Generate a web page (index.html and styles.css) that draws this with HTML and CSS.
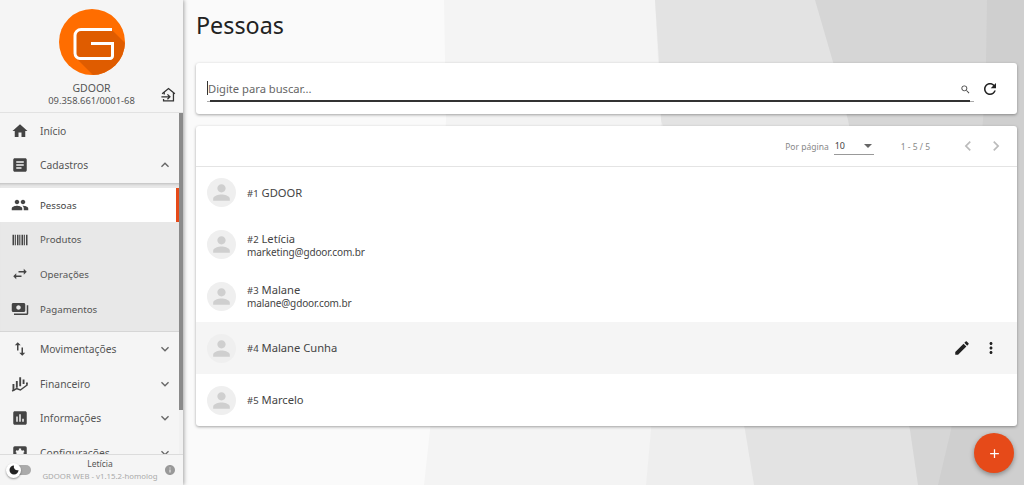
FILE: index.html
```html
<!DOCTYPE html>
<html lang="pt-BR">
<head>
<meta charset="utf-8">
<title>Pessoas</title>
<link rel="stylesheet" href="styles.css">
</head>
<body>
<div class="app">
  <aside class="sidebar">
    <header class="brand">
      <svg class="logo" viewBox="0 0 66 66">
        <defs><clipPath id="lc"><circle cx="33" cy="33" r="33"/></clipPath></defs>
        <circle cx="33" cy="33" r="33" fill="#ff6d00"/>
        <path clip-path="url(#lc)" d="M14 46 L37 69 H70 V38 L52 20 H18z" fill="#df5c00"/>
        <path d="M53 20.500H22a6 6 0 0 0-6 6v18a5 5 0 0 0 5 5h30a2.500 2.500 0 0 0 2.500-2.500V34.500H32" fill="none" stroke="#fff" stroke-width="3"/>
      </svg>
      <div class="brand-name">GDOOR</div>
      <div class="brand-doc">09.358.661/0001-68</div>
      <svg class="brand-switch" viewBox="0 0 24 24"><path d="M6 12V9M3 11 12 3.500 21 11M19 9v12H5v-2.500M2 15.300h12M10.500 11.800l3.500 3.500-3.500 3.500" fill="none" stroke="#333" stroke-width="1.800"/></svg>
    </header>
    <div class="nav-wrap">
      <nav class="nav">
        <a class="item"><svg class="ic" viewBox="0 0 24 24"><path d="M10 20v-6h4v6h5v-8h3L12 3 2 12h3v8z"/></svg><span>Início</span></a>
        <a class="item"><svg class="ic" viewBox="0 0 24 24"><path d="M19 3H5c-1.100 0-2 .9-2 2v14c0 1.100.9 2 2 2h14c1.100 0 2-.9 2-2V5c0-1.100-.9-2-2-2zm-5 14H7v-2h7v2zm3-4H7v-2h10v2zm0-4H7V7h10v2z"/></svg><span>Cadastros</span><svg class="chev" viewBox="0 0 24 24"><path d="M12 8l-6 6 1.410 1.410L12 10.830l4.590 4.580L18 14z"/></svg></a>
        <div class="sub">
          <a class="item sub-item active"><svg class="ic" viewBox="0 0 24 24"><path d="M16 11c1.660 0 2.990-1.340 2.990-3S17.660 5 16 5c-1.660 0-3 1.340-3 3s1.340 3 3 3zm-8 0c1.660 0 2.990-1.340 2.990-3S9.660 5 8 5C6.340 5 5 6.340 5 8s1.340 3 3 3zm0 2c-2.330 0-7 1.170-7 3.500V19h14v-2.500c0-2.330-4.670-3.500-7-3.500zm8 0c-.29 0-.62.02-.97.05 1.160.84 1.970 1.970 1.970 3.450V19h6v-2.500c0-2.330-4.670-3.500-7-3.500z"/></svg><span>Pessoas</span></a>
          <a class="item sub-item"><svg class="ic" viewBox="0 0 24 24"><path d="M2 5h2v14H2zM5 5h1.500v14H5zM8 5h2v14H8zM11 5h1.500v14H11zM14 5h2v14h-2zM17 5h1.500v14H17zM20 5h2v14h-2z"/></svg><span>Produtos</span></a>
          <a class="item sub-item"><svg class="ic" viewBox="0 0 24 24"><path d="M6.990 11L3 15l3.990 4v-3H14v-2H6.990v-3zM21 9l-3.990-4v3H10v2h7.010v3L21 9z"/></svg><span>Operações</span></a>
          <a class="item sub-item"><svg class="ic" viewBox="0 0 24 24"><path d="M19 14V6c0-1.100-.9-2-2-2H3c-1.100 0-2 .9-2 2v8c0 1.100.9 2 2 2h14c1.100 0 2-.9 2-2zm-9-1c-1.660 0-3-1.340-3-3s1.340-3 3-3 3 1.340 3 3-1.340 3-3 3zm13-6v11c0 1.100-.9 2-2 2H4v-2h17V7h2z"/></svg><span>Pagamentos</span></a>
        </div>
        <a class="item"><svg class="ic" viewBox="0 0 24 24"><path d="M16 17.010V10h-2v7.010h-3L15 21l4-3.990h-3zM9 3L5 6.990h3V14h2V6.990h3L9 3z"/></svg><span>Movimentações</span><svg class="chev" viewBox="0 0 24 24"><path d="M16.590 8.590L12 13.170 7.410 8.590 6 10l6 6 6-6z"/></svg></a>
        <a class="item"><svg class="ic" viewBox="0 0 24 24"><path d="M2 12h2.500v9H2zM6.500 8H9v9H6.500zM11 3h2.500v12H11zM15.500 6H18v6h-2.500zM20 10h2.500v3H20z"/><path d="M1.500 21.500l6-3.500 5 2 9.500-7" fill="none" stroke="#444" stroke-width="2"/></svg><span>Financeiro</span><svg class="chev" viewBox="0 0 24 24"><path d="M16.590 8.590L12 13.170 7.410 8.590 6 10l6 6 6-6z"/></svg></a>
        <a class="item"><svg class="ic" viewBox="0 0 24 24"><path d="M19 3H5c-1.100 0-2 .9-2 2v14c0 1.100.9 2 2 2h14c1.100 0 2-.9 2-2V5c0-1.100-.9-2-2-2zM9 17H7v-7h2v7zm4 0h-2V7h2v10zm4 0h-2v-4h2v4z"/></svg><span>Informações</span><svg class="chev" viewBox="0 0 24 24"><path d="M16.590 8.590L12 13.170 7.410 8.590 6 10l6 6 6-6z"/></svg></a>
        <a class="item"><svg class="ic" viewBox="0 0 24 24"><path fill-rule="evenodd" d="M5 3h14a2 2 0 0 1 2 2v14a2 2 0 0 1-2 2H5a2 2 0 0 1-2-2V5a2 2 0 0 1 2-2zm5.500 3v2L9 9 7.500 8 6 10.500l1.500 1v1L6 13.500 7.500 16 9 15l1.500 1v2h3v-2l1.500-1 1.500 1 1.500-2.500-1.500-1v-1l1.500-1L16.500 8 15 9l-1.500-1V6z"/></svg><span>Configurações</span><svg class="chev" viewBox="0 0 24 24"><path d="M16.590 8.590L12 13.170 7.410 8.590 6 10l6 6 6-6z"/></svg></a>
      </nav>
      <div class="scrollbar"><div class="thumb"></div></div>
    </div>
    <footer class="side-foot">
      <div class="toggle"><span class="track"></span><span class="knob"><svg viewBox="0 0 24 24"><path d="M12 3a9 9 0 1 0 9 9 7 7 0 0 1-9-9z"/></svg></span></div>
      <div class="foot-text">
        <div class="foot-user">Letícia</div>
        <div class="foot-ver">GDOOR WEB - v1.15.2-homolog</div>
      </div>
      <svg class="foot-info" viewBox="0 0 24 24"><path d="M12 2C6.480 2 2 6.480 2 12s4.480 10 10 10 10-4.480 10-10S17.520 2 12 2zm1 15h-2v-6h2v6zm0-8h-2V7h2v2z"/></svg>
    </footer>
  </aside>

  <main class="main">
    <svg class="bg" viewBox="-1 0 841 485" preserveAspectRatio="none">
      <rect x="-1" width="841" height="485" fill="#fafafa"/>
      <polygon points="260,0 840,0 840,485 240,485 246,430 262,120" fill="#f4f4f4"/>
      <polygon points="471,0 840,0 840,485 462,485 467,430 477,120" fill="#eeeeee"/>
      <polygon points="471,0 840,0 840,485 570,485 561,430 530,300 477,120 475,62" fill="#e3e3e3"/>
      <polygon points="631,0 840,0 840,485 734,485 726,430 664,120 649,62" fill="#d6d6d6"/>
      <polygon points="803,0 840,0 840,485 754,485 767,430 799,120 802,62" fill="#cfcfcf"/>
    </svg>
    <h1 class="title">Pessoas</h1>
    <section class="card search-card">
      <div class="search-field">
        <span class="caret"></span><span class="placeholder">Digite para buscar...</span>
        <svg class="search-ic" viewBox="0 0 24 24"><path d="M15.500 14h-.79l-.28-.27C15.410 12.590 16 11.110 16 9.500 16 5.910 13.090 3 9.500 3S3 5.910 3 9.500 5.910 16 9.500 16c1.610 0 3.090-.59 4.230-1.570l.27.28v.79l5 4.990L20.490 19l-4.990-5zm-6 0C7.010 14 5 11.990 5 9.500S7.010 5 9.500 5 14 7.010 14 9.500 11.990 14 9.500 14z"/></svg>
      </div>
      <svg class="refresh" viewBox="0 0 24 24"><path d="M17.650 6.350C16.200 4.900 14.210 4 12 4c-4.420 0-7.990 3.580-7.990 8s3.570 8 7.990 8c3.730 0 6.840-2.550 7.730-6h-2.080c-.82 2.330-3.040 4-5.650 4-3.310 0-6-2.690-6-6s2.690-6 6-6c1.660 0 3.140.69 4.220 1.780L13 11h7V4l-2.350 2.350z"/></svg>
    </section>
    <section class="card list-card">
      <div class="pager">
        <span class="per-label">Por página</span>
        <div class="per-select"><span>10</span><i class="arrow"></i></div>
        <span class="range">1 - 5 / 5</span>
        <svg class="pg" viewBox="0 0 24 24"><path d="M15.410 7.410L14 6l-6 6 6 6 1.410-1.410L10.830 12z"/></svg>
        <svg class="pg" viewBox="0 0 24 24"><path d="M10 6L8.590 7.410 13.170 12l-4.580 4.590L10 18l6-6z"/></svg>
      </div>
      <div class="row">
        <span class="avatar"><svg viewBox="0 0 24 24"><path d="M12 12c2.210 0 4-1.790 4-4s-1.790-4-4-4-4 1.790-4 4 1.790 4 4 4zm0 2c-2.670 0-8 1.340-8 4v2h16v-2c0-2.660-5.330-4-8-4z"/></svg></span>
        <div class="info"><div class="name"><small>#1</small> GDOOR</div></div>
      </div>
      <div class="row">
        <span class="avatar"><svg viewBox="0 0 24 24"><path d="M12 12c2.210 0 4-1.790 4-4s-1.790-4-4-4-4 1.790-4 4 1.790 4 4 4zm0 2c-2.670 0-8 1.340-8 4v2h16v-2c0-2.660-5.330-4-8-4z"/></svg></span>
        <div class="info"><div class="name"><small>#2</small> Letícia</div><div class="email">marketing@gdoor.com.br</div></div>
      </div>
      <div class="row">
        <span class="avatar"><svg viewBox="0 0 24 24"><path d="M12 12c2.210 0 4-1.790 4-4s-1.790-4-4-4-4 1.790-4 4 1.790 4 4 4zm0 2c-2.670 0-8 1.340-8 4v2h16v-2c0-2.660-5.330-4-8-4z"/></svg></span>
        <div class="info"><div class="name"><small>#3</small> Malane</div><div class="email">malane@gdoor.com.br</div></div>
      </div>
      <div class="row hover">
        <span class="avatar"><svg viewBox="0 0 24 24"><path d="M12 12c2.210 0 4-1.790 4-4s-1.790-4-4-4-4 1.790-4 4 1.790 4 4 4zm0 2c-2.670 0-8 1.340-8 4v2h16v-2c0-2.660-5.330-4-8-4z"/></svg></span>
        <div class="info"><div class="name"><small>#4</small> Malane Cunha</div></div>
        <div class="actions">
          <svg class="act-edit" viewBox="0 0 24 24"><path d="M3 17.250V21h3.750L17.810 9.940l-3.750-3.750L3 17.250zM20.710 7.040c.39-.39.39-1.020 0-1.410l-2.340-2.340c-.39-.39-1.020-.39-1.410 0l-1.830 1.830 3.750 3.750 1.830-1.830z"/></svg>
          <svg class="act-more" viewBox="0 0 24 24"><path d="M12 8c1.100 0 2-.9 2-2s-.9-2-2-2-2 .9-2 2 .9 2 2 2zm0 2c-1.100 0-2 .9-2 2s.9 2 2 2 2-.9 2-2-.9-2-2-2zm0 6c-1.100 0-2 .9-2 2s.9 2 2 2 2-.9 2-2-.9-2-2-2z"/></svg>
        </div>
      </div>
      <div class="row">
        <span class="avatar"><svg viewBox="0 0 24 24"><path d="M12 12c2.210 0 4-1.790 4-4s-1.790-4-4-4-4 1.790-4 4 1.790 4 4 4zm0 2c-2.670 0-8 1.340-8 4v2h16v-2c0-2.660-5.330-4-8-4z"/></svg></span>
        <div class="info"><div class="name"><small>#5</small> Marcelo</div></div>
      </div>
    </section>
    <button class="fab" aria-label="Adicionar"><svg viewBox="0 0 24 24"><path d="M19 13h-6v6h-2v-6H5v-2h6V5h2v6h6v2z"/></svg></button>
  </main>
</div>
</body>
</html>
```

FILE: styles.css
```css
* { box-sizing: border-box; }
html, body { margin: 0; height: 100%; overflow: hidden; }
body { font-family: "Noto Sans", "Open Sans", sans-serif; color: #444; background: #fafafa; }
.app { display: flex; height: 485px; width: 1024px; }

/* Sidebar */
.sidebar { width: 183px; flex: none; display: flex; flex-direction: column; background: #f5f5f5; box-shadow: 1px 0 4px rgba(0,0,0,.35); position: relative; z-index: 2; }
.brand { height: 113px; flex: none; padding-top: 9px; display: flex; flex-direction: column; align-items: center; position: relative; border-bottom: 1px solid #e2e2e2; }
.logo { width: 66px; height: 66px; display: block; }
.brand-name { font-size: 10.500px; line-height: 13px; margin-top: 7px; color: #555; }
.brand-doc { font-size: 9.400px; line-height: 12px; color: #555; }
.brand-switch { position: absolute; left: 160px; top: 86px; width: 17px; height: 17px; }
.nav-wrap { flex: 1; min-height: 0; display: flex; overflow: hidden; }
.nav { flex: 1; min-width: 0; display: block; padding-top: .5px; }
.item { height: 34.670px; display: flex; align-items: center; padding: 0 12px 0 11px; font-size: 10.300px; color: #555; }
.ic { width: 18px; height: 18px; flex: none; fill: #444; margin-right: 11px; }
.item span { flex: 1; }
.chev { width: 16px; height: 16px; fill: #666; flex: none; margin-right: -5.500px; }
.sub { background: #e8e8e8; padding: 5px 0 0; height: 149px; box-shadow: inset 0 3px 3px -2px rgba(0,0,0,.2), inset 0 -1px 0 #d6d6d6; }
.sub-item { font-size: 9.700px; }
.sub-item.active { background: #fff; border-right: 3px solid #e64a19; color: #444; }
.scrollbar { width: 4px; flex: none; background: #f1f1f1; }
.thumb { height: 297px; background: #8a8a8a; }
.side-foot { height: 31px; flex: none; display: flex; align-items: center; background: #f5f5f5; border-top: 1px solid #dcdcdc; padding: 0 7px 0 8px; position: relative; }
.toggle { width: 23px; height: 12px; position: relative; flex: none; }
.track { display: block; width: 23px; height: 10px; margin-top: 1px; border-radius: 5px; background: #aaa; }
.knob { position: absolute; left: -2px; top: -1.500px; width: 15px; height: 15px; border-radius: 50%; background: #fff; box-shadow: 0 1px 2px rgba(0,0,0,.4); display: flex; align-items: center; justify-content: center; }
.knob svg { width: 12px; height: 12px; fill: #222; }
.foot-text { flex: 1; text-align: center; min-width: 0; padding-left: 5px; }
.foot-user { font-size: 8.500px; line-height: 12px; color: #555; }
.foot-ver { font-size: 7.800px; line-height: 12px; color: #aaa; white-space: nowrap; }
.foot-info { width: 12px; height: 12px; fill: #999; flex: none; }

/* Main */
.main { flex: 1; min-width: 0; position: relative; padding: 0 7px 0 13px; display: flex; flex-direction: column; }
.bg { position: absolute; inset: 0; width: 100%; height: 100%; z-index: 0; }
.title, .card { position: relative; z-index: 1; }
.title { margin: 0; height: 63px; padding-top: 8px; font-size: 23.300px; line-height: 34px; font-weight: 400; color: #222; }
.card { background: #fff; border-radius: 3px; box-shadow: 0 1px 3px rgba(0,0,0,.35); }
.search-card { height: 51px; display: flex; align-items: center; padding: 0 18px 0 11px; margin-bottom: 12px; }
.search-field { flex: 1; position: relative; display: flex; align-items: center; height: 24px; border-bottom: 1px solid #aaa; margin-top: 2px; }
.search-field::after { content: ""; position: absolute; left: 3px; right: 4px; bottom: -1px; height: 2px; background: #333; }
.caret { width: 1px; height: 14px; background: #333; margin-bottom: 2px; }
.placeholder { flex: 1; font-size: 11.200px; color: #666; padding-bottom: 2px; }
.search-ic { width: 11px; height: 11px; fill: #444; margin-right: 3.500px; }
.refresh { width: 18px; height: 18px; fill: #222; margin-left: 7px; flex: none; }
.list-card { height: 300px; display: flex; flex-direction: column; }
.pager { height: 41px; flex: none; display: flex; align-items: center; justify-content: flex-end; border-bottom: 1px solid #e4e4e4; padding-right: 11px; font-size: 8.500px; color: #888; }
.per-label { margin-right: 5px; }
.per-select { width: 40px; height: 17px; display: flex; align-items: center; justify-content: space-between; border-bottom: 1px solid #999; color: #444; padding: 0 1.500px 0 1px; margin-right: 27px; font-size: 9px; }
.arrow { width: 0; height: 0; border-left: 4px solid transparent; border-right: 4px solid transparent; border-top: 4px solid #666; }
.range { margin-right: 28px; }
.pg { width: 20px; height: 20px; fill: #bbb; flex: none; margin-left: 8px; }
.pg:first-of-type { margin-left: 0; }
.row { height: 51.800px; flex: none; display: flex; align-items: center; padding: 0 17px 0 11px; }
.row.hover { background: #f5f5f5; }
.avatar { width: 29px; height: 29px; border-radius: 50%; background: #efefef; margin-right: 11px; flex: none; display: flex; align-items: center; justify-content: center; }
.avatar svg { width: 25px; height: 25px; fill: #cfcfcf; }
.info { flex: 1; min-width: 0; padding-top: 1px; }
.name { font-size: 11.200px; line-height: 12px; color: #444; }
.name small { font-size: 9.500px; color: #444; }
.email { font-size: 10px; line-height: 12px; letter-spacing: -.12px; color: #444; }
.actions { display: flex; align-items: center; }
.act-edit { width: 18px; height: 18px; fill: #222; margin-right: 11px; }
.act-more { width: 18px; height: 18px; fill: #222; }
.fab { position: absolute; z-index: 3; right: 10px; top: 433px; width: 40px; height: 40px; border: 0; padding: 0; border-radius: 50%; background: #e64a19; box-shadow: 0 2px 5px rgba(0,0,0,.35); display: flex; align-items: center; justify-content: center; }
.fab svg { width: 15px; height: 15px; fill: #fff; }
```
